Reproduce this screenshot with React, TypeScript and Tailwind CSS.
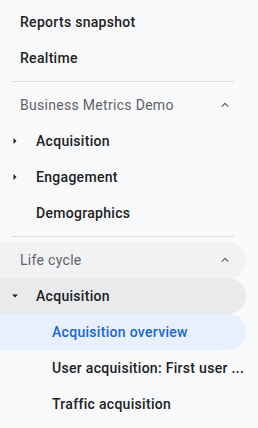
import React from 'react';

const font = { fontFamily: 'Roboto, "Noto Sans", sans-serif' };

function ChevronUp() {
  return (
    <svg width="24" height="24" viewBox="0 0 24 24" className="text-[#5f6368]">
      <path d="M7.4 15.4 12 10.8l4.6 4.6L18 14l-6-6-6 6z" fill="currentColor" transform="translate(12 12) scale(0.62) translate(-12 -12)" />
    </svg>
  );
}

function Caret({ down = false }: { down?: boolean }) {
  return (
    <svg width="10" height="10" viewBox="0 0 10 10" className="text-[#202124]">
      {down ? <path d="M2 3.5h6L5 6.5z" fill="currentColor" /> : <path d="M3.5 2v6L6.5 5z" fill="currentColor" />}
    </svg>
  );
}

function Divider() {
  return <div className="mx-3 my-[5px] h-px w-[222px] bg-[#dadce0]" />;
}

function Row({ children, className = '', indent = 20 }: { children: React.ReactNode; className?: string; indent?: number }) {
  return (
    <div
      className={`flex h-9 w-[246px] items-center whitespace-nowrap rounded-r-full text-[14px] tracking-[0.3px] ${className}`}
      style={{ paddingLeft: indent }}
    >
      {children}
    </div>
  );
}

export default function App() {
  return (
    <div className="min-h-[428px] w-[258px] bg-[#f8f9fa] pt-1" style={font}>
      <Row className="font-medium text-[#202124]">Reports snapshot</Row>
      <Row className="font-medium text-[#202124]">Realtime</Row>
      <Divider />
      <Row className="justify-between pr-[9px] text-[#5f6368]">
        <span>Business Metrics Demo</span>
        <ChevronUp />
      </Row>
      <Row indent={10} className="font-medium text-[#202124]">
        <span className="mr-4 flex w-[10px]"><Caret /></span>Acquisition
      </Row>
      <Row indent={10} className="font-medium text-[#202124]">
        <span className="mr-4 flex w-[10px]"><Caret /></span>Engagement
      </Row>
      <Row indent={36} className="font-medium text-[#202124]">Demographics</Row>
      <Divider />
      <Row className="justify-between bg-[#f1f2f4] pr-[9px] text-[#5f6368]">
        <span>Life cycle</span>
        <ChevronUp />
      </Row>
      <Row indent={10} className="bg-[#e9eaec] font-medium text-[#202124]">
        <span className="mr-4 flex w-[10px]"><Caret down /></span>Acquisition
      </Row>
      <Row indent={52} className="bg-[#e8f0fe] font-medium text-[#1967d2]">Acquisition overview</Row>
      <Row indent={52} className="font-medium text-[#202124]">User acquisition: First user ...</Row>
      <Row indent={52} className="font-medium text-[#202124]">Traffic acquisition</Row>
    </div>
  );
}
